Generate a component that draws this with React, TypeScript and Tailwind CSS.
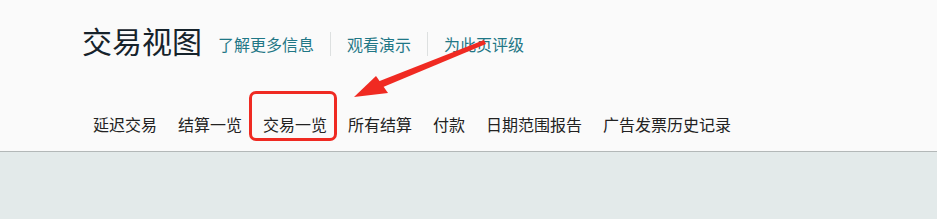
import React from 'react';

const navItems = ['延迟交易', '结算一览', '交易一览', '所有结算', '付款', '日期范围报告', '广告发票历史记录'];
const links = ['了解更多信息', '观看演示', '为此页评级'];

const App: React.FC = () => {
  return (
    <div
      className="relative w-[937px] h-[219px] overflow-hidden bg-[#e3eaea]"
      style={{ fontFamily: '"Microsoft YaHei", "Noto Sans CJK SC", sans-serif' }}
    >
      {/* Header */}
      <div className="h-[152px] bg-[#fafafa] border-b border-[#b3b8b8]">
        <div className="flex items-end pl-[82px] pt-[20px]">
          <h1 className="text-[30px] leading-[40px] text-[#16232b] font-normal">交易视图</h1>
          <div className="flex items-center ml-[16px] mb-[4px]">
            {links.map((l, i) => (
              <React.Fragment key={l}>
                {i > 0 && <span className="w-px h-[24px] bg-[#dde0e0] mx-[16px]" />}
                <a className="text-[16px] leading-[24px] text-[#1f7786]">{l}</a>
              </React.Fragment>
            ))}
          </div>
        </div>

        {/* Tabs */}
        <div className="flex items-center gap-[21px] pl-[93px] mt-[52px]">
          {navItems.map((item) => (
            <div key={item} className="relative">
              <span className="text-[16px] leading-[24px] text-[#222]">{item}</span>
              {item === '交易一览' && (
                <span className="absolute left-[-14px] top-[-21px] w-[88px] h-[50px] border-[3px] border-[#ef2a22] rounded-[7px]" />
              )}
            </div>
          ))}
        </div>
      </div>

      {/* Annotation arrow */}
      <svg className="absolute left-0 top-0" width="937" height="219">
        <polygon points="484,40 486,44 376,90 372,84" fill="#f02a22" />
        <polygon points="354,97 376,76 388,93" fill="#f02a22" />
      </svg>
    </div>
  );
};

export default App;
